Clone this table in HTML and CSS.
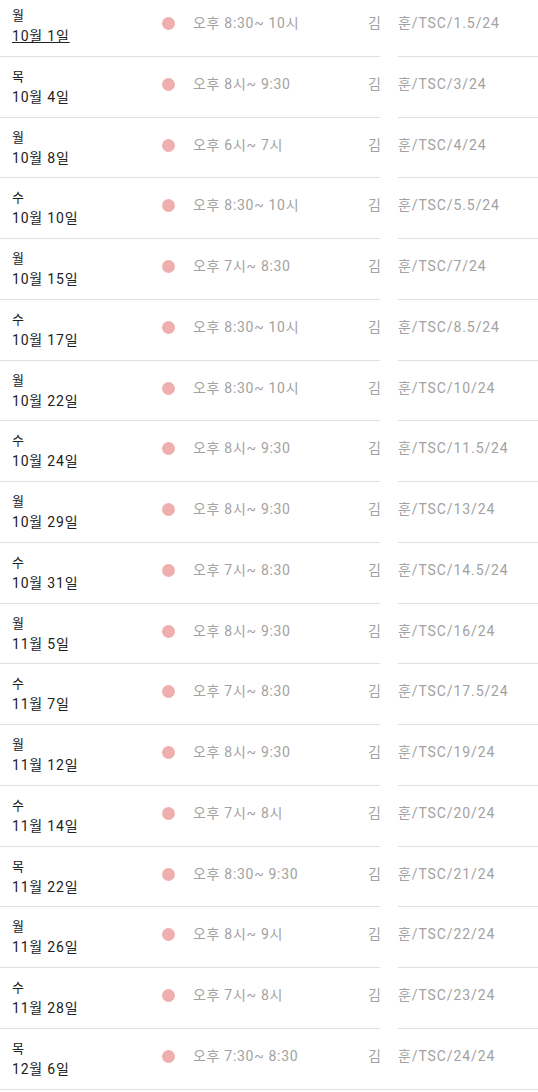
FILE: index.html
```html
<!DOCTYPE html>
<html lang="ko">
<head>
  <meta charset="UTF-8">
  <meta name="viewport" content="width=device-width, initial-scale=1.0">
  <title>일정</title>
  <link rel="stylesheet" href="styles.css">
</head>
<body>

  <div class="list">
    <div class="row">
      <div class="main">
        <div class="date"><div class="day">월</div><a class="day-link" href="#">10월 1일</a></div>
        <span class="dot"></span>
        <div class="time">오후 8:30~ 10시</div>
        <div class="name">김</div>
      </div>
      <div class="note">훈/TSC/1.5/24</div>
    </div>
    <div class="row">
      <div class="main">
        <div class="date"><div class="day">목</div><div>10월 4일</div></div>
        <span class="dot"></span>
        <div class="time">오후 8시~ 9:30</div>
        <div class="name">김</div>
      </div>
      <div class="note">훈/TSC/3/24</div>
    </div>
    <div class="row">
      <div class="main">
        <div class="date"><div class="day">월</div><div>10월 8일</div></div>
        <span class="dot"></span>
        <div class="time">오후 6시~ 7시</div>
        <div class="name">김</div>
      </div>
      <div class="note">훈/TSC/4/24</div>
    </div>
    <div class="row">
      <div class="main">
        <div class="date"><div class="day">수</div><div>10월 10일</div></div>
        <span class="dot"></span>
        <div class="time">오후 8:30~ 10시</div>
        <div class="name">김</div>
      </div>
      <div class="note">훈/TSC/5.5/24</div>
    </div>
    <div class="row">
      <div class="main">
        <div class="date"><div class="day">월</div><div>10월 15일</div></div>
        <span class="dot"></span>
        <div class="time">오후 7시~ 8:30</div>
        <div class="name">김</div>
      </div>
      <div class="note">훈/TSC/7/24</div>
    </div>
    <div class="row">
      <div class="main">
        <div class="date"><div class="day">수</div><div>10월 17일</div></div>
        <span class="dot"></span>
        <div class="time">오후 8:30~ 10시</div>
        <div class="name">김</div>
      </div>
      <div class="note">훈/TSC/8.5/24</div>
    </div>
    <div class="row">
      <div class="main">
        <div class="date"><div class="day">월</div><div>10월 22일</div></div>
        <span class="dot"></span>
        <div class="time">오후 8:30~ 10시</div>
        <div class="name">김</div>
      </div>
      <div class="note">훈/TSC/10/24</div>
    </div>
    <div class="row">
      <div class="main">
        <div class="date"><div class="day">수</div><div>10월 24일</div></div>
        <span class="dot"></span>
        <div class="time">오후 8시~ 9:30</div>
        <div class="name">김</div>
      </div>
      <div class="note">훈/TSC/11.5/24</div>
    </div>
    <div class="row">
      <div class="main">
        <div class="date"><div class="day">월</div><div>10월 29일</div></div>
        <span class="dot"></span>
        <div class="time">오후 8시~ 9:30</div>
        <div class="name">김</div>
      </div>
      <div class="note">훈/TSC/13/24</div>
    </div>
    <div class="row">
      <div class="main">
        <div class="date"><div class="day">수</div><div>10월 31일</div></div>
        <span class="dot"></span>
        <div class="time">오후 7시~ 8:30</div>
        <div class="name">김</div>
      </div>
      <div class="note">훈/TSC/14.5/24</div>
    </div>
    <div class="row">
      <div class="main">
        <div class="date"><div class="day">월</div><div>11월 5일</div></div>
        <span class="dot"></span>
        <div class="time">오후 8시~ 9:30</div>
        <div class="name">김</div>
      </div>
      <div class="note">훈/TSC/16/24</div>
    </div>
    <div class="row">
      <div class="main">
        <div class="date"><div class="day">수</div><div>11월 7일</div></div>
        <span class="dot"></span>
        <div class="time">오후 7시~ 8:30</div>
        <div class="name">김</div>
      </div>
      <div class="note">훈/TSC/17.5/24</div>
    </div>
    <div class="row">
      <div class="main">
        <div class="date"><div class="day">월</div><div>11월 12일</div></div>
        <span class="dot"></span>
        <div class="time">오후 8시~ 9:30</div>
        <div class="name">김</div>
      </div>
      <div class="note">훈/TSC/19/24</div>
    </div>
    <div class="row">
      <div class="main">
        <div class="date"><div class="day">수</div><div>11월 14일</div></div>
        <span class="dot"></span>
        <div class="time">오후 7시~ 8시</div>
        <div class="name">김</div>
      </div>
      <div class="note">훈/TSC/20/24</div>
    </div>
    <div class="row">
      <div class="main">
        <div class="date"><div class="day">목</div><div>11월 22일</div></div>
        <span class="dot"></span>
        <div class="time">오후 8:30~ 9:30</div>
        <div class="name">김</div>
      </div>
      <div class="note">훈/TSC/21/24</div>
    </div>
    <div class="row">
      <div class="main">
        <div class="date"><div class="day">월</div><div>11월 26일</div></div>
        <span class="dot"></span>
        <div class="time">오후 8시~ 9시</div>
        <div class="name">김</div>
      </div>
      <div class="note">훈/TSC/22/24</div>
    </div>
    <div class="row">
      <div class="main">
        <div class="date"><div class="day">수</div><div>11월 28일</div></div>
        <span class="dot"></span>
        <div class="time">오후 7시~ 8시</div>
        <div class="name">김</div>
      </div>
      <div class="note">훈/TSC/23/24</div>
    </div>
    <div class="row">
      <div class="main">
        <div class="date"><div class="day">목</div><div>12월 6일</div></div>
        <span class="dot"></span>
        <div class="time">오후 7:30~ 8:30</div>
        <div class="name">김</div>
      </div>
      <div class="note">훈/TSC/24/24</div>
    </div>
  </div>

</body>
</html>
```

FILE: styles.css
```css
body {
  font-family: Roboto, 'Noto Sans CJK KR', sans-serif;
  background-color: #fff;
  color: #212121;
  margin: 0;
  padding: 0;
  font-size: 14px;
  overflow: hidden;
}

.list {
  margin-top: -4px;
}

.row {
  display: flex;
  height: 60.75px;
}

.main {
  display: flex;
  width: 380px;
  border-bottom: 1px solid #e0e0e0;
  box-sizing: border-box;
}

.date {
  width: 150px;
  padding: 9px 0 0 12px;
  line-height: 21px;
  font-size: 14px;
  letter-spacing: 0.8px;
  color: #212121;
}

.day {
  font-size: 13px;
}

.day-link {
  color: #212121;
  text-decoration: underline;
}

.dot {
  width: 13px;
  height: 13px;
  margin-top: 21px;
  border-radius: 50%;
  background-color: #efafaf;
  flex-shrink: 0;
}

.time,
.name,
.note {
  padding-top: 17px;
  line-height: 21px;
  letter-spacing: 0.7px;
  color: #a2a2a2;
}

.time {
  width: 175px;
  margin-left: 18px;
}

.name {
  width: 12px;
}

.note {
  flex: 1;
  margin-left: 18px;
  letter-spacing: 0.9px;
  border-bottom: 1px solid #e0e0e0;
  box-sizing: border-box;
}

.row:last-child {
  border-bottom: 1px solid #e0e0e0;
  box-sizing: border-box;
}

.row:last-child .main,
.row:last-child .note {
  border-bottom: none;
}
```
